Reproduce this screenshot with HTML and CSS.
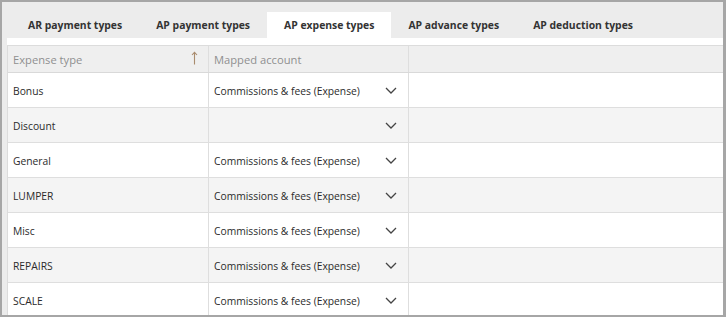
FILE: index.html
```html
<!DOCTYPE html>
<html>
<head>
<meta charset="utf-8">
<link rel="stylesheet" href="styles.css">
</head>
<body>
<div class="frame">
  <div class="tabs">
    <div class="tab">AR payment types</div>
    <div class="tab">AP payment types</div>
    <div class="tab active">AP expense types</div>
    <div class="tab">AP advance types</div>
    <div class="tab">AP deduction types</div>
  </div>
  <div class="panel">
    <div class="grid">
      <div class="row head">
        <div class="cell c1">Expense type
          <svg class="sort" width="7" height="14" viewBox="0 0 7 14"><path d="M3.5 1.5V13.5M1 4L3.5 1.3L6 4" fill="none" stroke="#a98b6d" stroke-width="1.1"/></svg>
        </div>
        <div class="cell c2">Mapped account</div>
        <div class="cell c3"></div>
      </div>
      <div class="row"><div class="cell c1">Bonus</div><div class="cell c2"><span>Commissions &amp; fees (Expense)</span><svg class="chev" width="12" height="7" viewBox="0 0 12 7"><path d="M1 1L6 6L11 1" fill="none" stroke="#444" stroke-width="1.3"/></svg></div><div class="cell c3"></div></div>
      <div class="row alt"><div class="cell c1">Discount</div><div class="cell c2"><span></span><svg class="chev" width="12" height="7" viewBox="0 0 12 7"><path d="M1 1L6 6L11 1" fill="none" stroke="#444" stroke-width="1.3"/></svg></div><div class="cell c3"></div></div>
      <div class="row"><div class="cell c1">General</div><div class="cell c2"><span>Commissions &amp; fees (Expense)</span><svg class="chev" width="12" height="7" viewBox="0 0 12 7"><path d="M1 1L6 6L11 1" fill="none" stroke="#444" stroke-width="1.3"/></svg></div><div class="cell c3"></div></div>
      <div class="row alt"><div class="cell c1">LUMPER</div><div class="cell c2"><span>Commissions &amp; fees (Expense)</span><svg class="chev" width="12" height="7" viewBox="0 0 12 7"><path d="M1 1L6 6L11 1" fill="none" stroke="#444" stroke-width="1.3"/></svg></div><div class="cell c3"></div></div>
      <div class="row"><div class="cell c1">Misc</div><div class="cell c2"><span>Commissions &amp; fees (Expense)</span><svg class="chev" width="12" height="7" viewBox="0 0 12 7"><path d="M1 1L6 6L11 1" fill="none" stroke="#444" stroke-width="1.3"/></svg></div><div class="cell c3"></div></div>
      <div class="row alt"><div class="cell c1">REPAIRS</div><div class="cell c2"><span>Commissions &amp; fees (Expense)</span><svg class="chev" width="12" height="7" viewBox="0 0 12 7"><path d="M1 1L6 6L11 1" fill="none" stroke="#444" stroke-width="1.3"/></svg></div><div class="cell c3"></div></div>
      <div class="row"><div class="cell c1">SCALE</div><div class="cell c2"><span>Commissions &amp; fees (Expense)</span><svg class="chev" width="12" height="7" viewBox="0 0 12 7"><path d="M1 1L6 6L11 1" fill="none" stroke="#444" stroke-width="1.3"/></svg></div><div class="cell c3"></div></div>
    </div>
  </div>
</div>
</body>
</html>
```
FILE: styles.css
```css
* { box-sizing: border-box; }
html, body { margin: 0; padding: 0; }
body { width: 726px; height: 317px; overflow: hidden; font-family: "Open Sans", "Noto Sans", sans-serif; }
.frame {
  width: 726px; height: 317px;
  border-style: solid; border-color: #a6a6a6;
  border-width: 2px 3px 2px 2px;
  background: #ececec;
  padding: 10px 0 0 5px;
  display: flex; flex-direction: column;
  overflow: hidden;
}
.tabs { display: flex; flex: none; height: 26px; padding-left: 4px; }
.tab {
  padding: 0 17px;
  font-size: 10.4px; font-weight: 700; color: #333;
  display: flex; align-items: center;
}
.tab.active { background: #fff; }
.panel { flex: none; height: 300px; background: #fff; padding-top: 7px; }
.grid { border-left: 1px solid #dcdcdc; border-top: 1px solid #dcdcdc; }
.row { display: flex; height: 35px; border-bottom: 1px solid #dedede; }
.row.alt { background: #f4f4f4; }
.row.head { height: 27px; background: #efefef; border-bottom: 1px solid #d9d9d9; }
.cell { display: flex; align-items: center; font-size: 10.3px; color: #2b2b2b; padding-top: 1px; }
.head .cell { color: #8f8f8f; font-size: 11.2px; padding-top: 0; }
.c1 { width: 201px; padding-left: 5px; border-right: 1px solid #dedede; position: relative; }
.c2 { width: 200px; padding-left: 5px; padding-right: 11px; border-right: 1px solid #dedede; justify-content: space-between; }
.c3 { flex: 1; }
.sort { position: absolute; right: 10px; top: 5px; }
.chev { flex: none; }
```
